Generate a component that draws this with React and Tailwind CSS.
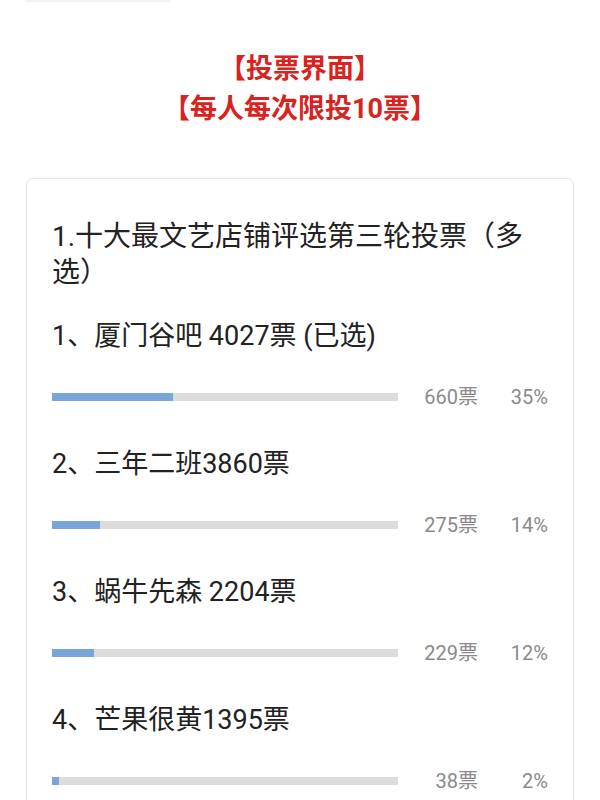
import React from "react";

const options = [
  { label: "1、厦门谷吧 4027票 (已选)", count: "660票", pct: 35 },
  { label: "2、三年二班3860票", count: "275票", pct: 14 },
  { label: "3、蜗牛先森 2204票", count: "229票", pct: 12 },
  { label: "4、芒果很黄1395票", count: "38票", pct: 2 },
];

export default function App() {
  return (
    <div
      className="w-[600px] h-[800px] overflow-hidden bg-white"
      style={{ fontFamily: 'Roboto, "Noto Sans CJK SC", sans-serif' }}
    >
      <div className="ml-[25px] w-[145px] h-[2px] bg-[#f1f1f1]" />
      <div className="pt-[47px] flex flex-col items-center text-[27px] leading-[40px] font-bold text-[#d8231f]">
        <div>【投票界面】</div>
        <div>【每人每次限投10票】</div>
      </div>
      <div className="mt-[49px] mx-[26px] rounded-[8px] border border-[#e6e6e6] shadow-[0_0_3px_rgba(0,0,0,0.05)] pt-[40px] pl-[25px] pr-[25px] pb-[20px]">
        <div className="text-[28px] leading-[36px] text-[#222]">
          1.十大最文艺店铺评选第三轮投票（多选）
        </div>
        <div className="mt-[25px]">
          {options.map((o) => (
            <div key={o.label} className="mb-[35px]">
              <div className="text-[27px] leading-[40px] text-[#222] whitespace-nowrap">
                {o.label}
              </div>
              <div className="mt-[29px] h-[24px] flex items-center">
                <div className="w-[346px] h-[8px] bg-[#dcdcdc]">
                  <div
                    className="h-full bg-[#79a6d9]"
                    style={{ width: `${Math.max(o.pct, 1.5)}%` }}
                  />
                </div>
                <div className="w-[80px] text-right text-[20px] text-[#8a8a8a]">
                  {o.count}
                </div>
                <div className="w-[70px] text-right text-[20px] text-[#8a8a8a]">
                  {o.pct}%
                </div>
              </div>
            </div>
          ))}
        </div>
      </div>
    </div>
  );
}
